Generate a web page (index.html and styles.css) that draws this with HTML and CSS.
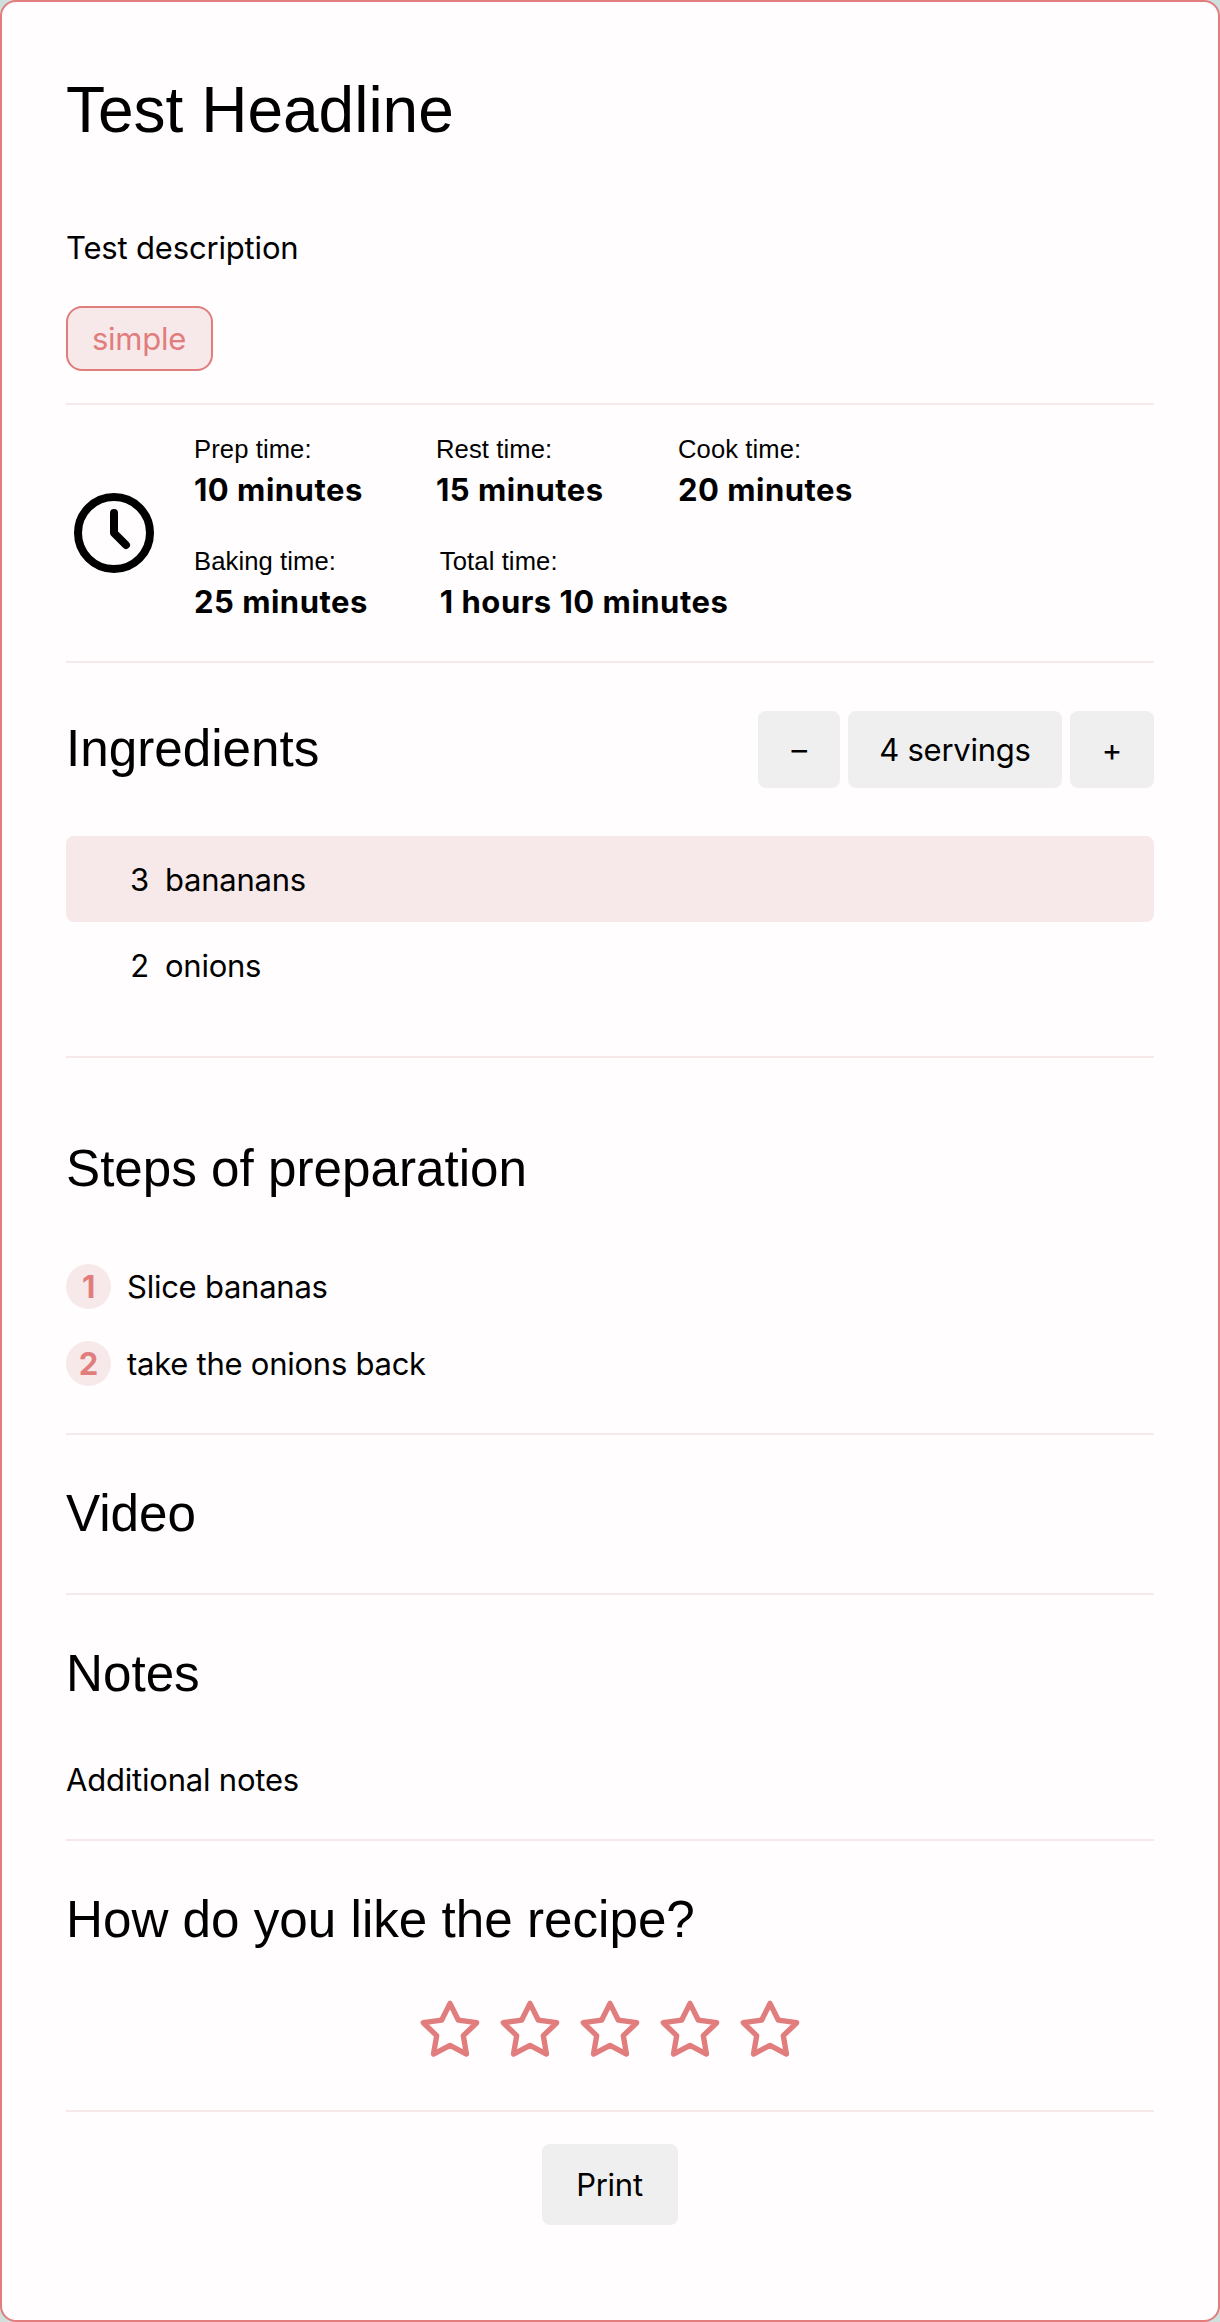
FILE: index.html
```html
<!DOCTYPE html>
<html lang="en">
<head>
<meta charset="utf-8">
<title>Test Headline</title>
<link rel="stylesheet" href="styles.css">
</head>
<body>
<svg class="sprite" aria-hidden="true">
  <symbol id="star" viewBox="0 0 24 24">
    <polygon points="12 2 15.09 8.26 22 9.27 17 14.14 18.18 21.02 12 17.77 5.82 21.02 7 14.14 2 9.27 8.91 8.26 12 2"/>
  </symbol>
</svg>
<article class="recipe">
  <header class="intro">
    <h1 class="title">Test Headline</h1>
    <p class="description">Test description</p>
    <span class="tag">simple</span>
  </header>

  <section class="times">
    <svg class="clock" viewBox="0 0 24 24"><circle cx="12" cy="12" r="9"/><path d="M12 7v5l3 3"/></svg>
    <div class="time-list">
      <div class="time-row">
        <div class="time"><div class="label">Prep time:</div><div class="value">10 minutes</div></div>
        <div class="time"><div class="label">Rest time:</div><div class="value">15 minutes</div></div>
        <div class="time"><div class="label">Cook time:</div><div class="value">20 minutes</div></div>
      </div>
      <div class="time-row">
        <div class="time"><div class="label">Baking time:</div><div class="value">25 minutes</div></div>
        <div class="time"><div class="label">Total time:</div><div class="value">1 hours 10 minutes</div></div>
      </div>
    </div>
  </section>

  <section class="ingredients">
    <div class="ingredients-head">
      <h2 class="heading">Ingredients</h2>
      <div class="servings">
        <button class="button minus">–</button>
        <button class="button count">4 servings</button>
        <button class="button plus">+</button>
      </div>
    </div>
    <ul class="ingredient-list">
      <li class="ingredient"><span class="amount">3</span><span>bananans</span></li>
      <li class="ingredient"><span class="amount">2</span><span>onions</span></li>
    </ul>
  </section>

  <section class="steps">
    <h2 class="heading">Steps of preparation</h2>
    <ol class="step-list">
      <li class="step"><span class="number">1</span><span>Slice bananas</span></li>
      <li class="step"><span class="number">2</span><span>take the onions back</span></li>
    </ol>
  </section>

  <section class="video">
    <h2 class="heading">Video</h2>
  </section>

  <section class="notes">
    <h2 class="heading">Notes</h2>
    <p class="note">Additional notes</p>
  </section>

  <section class="rating">
    <h2 class="heading">How do you like the recipe?</h2>
    <div class="stars">
      <svg class="star"><use href="#star"/></svg>
      <svg class="star"><use href="#star"/></svg>
      <svg class="star"><use href="#star"/></svg>
      <svg class="star"><use href="#star"/></svg>
      <svg class="star"><use href="#star"/></svg>
    </div>
  </section>

  <footer class="actions">
    <button class="button print">Print</button>
  </footer>
</article>
</body>
</html>
```
FILE: styles.css
```css
:root {
  --accent: #e17d7d;
  --tint: #f7e9e9;
}

* {
  box-sizing: border-box;
}

body {
  margin: 0;
  background: #cfdfdc;
  color: #000;
  font: 31px/48px Inter, "Liberation Sans", sans-serif;
  letter-spacing: -0.25px;
}

h1, h2, p, ul, ol {
  margin: 0;
  padding: 0;
  font-weight: 400;
}

ul, ol {
  list-style: none;
}

.sprite {
  display: none;
}

.recipe {
  min-height: 2322px;
  padding: 70px 64px 0;
  border: 2px solid var(--accent);
  border-radius: 16px;
  background: #fffdfe;
}

.intro,
.times,
.ingredients,
.steps,
.video,
.notes,
.rating {
  border-bottom: 2px solid var(--tint);
}

.title,
.heading,
.label {
  font-family: "Liberation Sans", Arial, sans-serif;
  letter-spacing: 0;
}

.title {
  font-size: 64px;
  line-height: 76px;
}

.heading {
  font-size: 51.2px;
  line-height: 60px;
}

.intro {
  display: flex;
  flex-direction: column;
  align-items: flex-start;
  padding-bottom: 32px;
}

.description {
  margin-top: 76px;
  letter-spacing: -0.17px;
}

.tag {
  height: 65px;
  margin-top: 34px;
  padding: 0 24px;
  width: 147px;
  border: 2px solid var(--accent);
  border-radius: 16px;
  background: var(--tint);
  color: var(--accent);
  line-height: 62px;
}

.times {
  display: flex;
  align-items: center;
  gap: 32px;
  height: 258px;
}

.clock {
  width: 96px;
  height: 96px;
  fill: none;
  stroke: #000;
  stroke-width: 2;
  stroke-linecap: round;
  stroke-linejoin: round;
}

.time-list {
  display: flex;
  flex-direction: column;
  gap: 31px;
  padding-bottom: 7px;
}

.time-row {
  display: flex;
  gap: 72px;
}

.time {
  min-width: 170px;
}

.label {
  font-size: 25.6px;
  line-height: 33px;
  letter-spacing: 0.1px;
}

.value {
  font-weight: 700;
  letter-spacing: 0.5px;
}

.ingredients {
  padding: 48px 0;
}

.ingredients-head {
  display: flex;
  justify-content: space-between;
  align-items: center;
}

.ingredients-head .heading {
  padding-bottom: 2px;
}

.servings {
  display: flex;
  gap: 8px;
}

.button {
  height: 77px;
  padding: 0;
  border: 0;
  border-radius: 8px;
  background: #efefef;
  color: #000;
  font: inherit;
  letter-spacing: inherit;
  text-align: center;
}

.minus {
  width: 82px;
}

.count {
  width: 214px;
}

.plus {
  width: 84px;
}

.ingredient-list {
  margin-top: 48px;
}

.ingredient {
  display: flex;
  align-items: center;
  gap: 16px;
  height: 86px;
  padding-top: 2px;
  border-radius: 8px;
}

.ingredient:nth-child(odd) {
  background: var(--tint);
}

.amount {
  width: 83px;
  text-align: right;
}

.steps {
  padding: 81px 0 47px;
}

.step-list {
  display: flex;
  flex-direction: column;
  gap: 32px;
  margin-top: 65px;
}

.step {
  display: flex;
  align-items: center;
  gap: 16px;
  height: 45px;
}

.number {
  width: 45px;
  height: 45px;
  border-radius: 50%;
  background: var(--tint);
  color: var(--accent);
  font-weight: 700;
  line-height: 45px;
  text-align: center;
}

.video {
  padding: 49px 0 49px;
}

.notes {
  padding: 49px 0 35px;
}

.note {
  margin-top: 52px;
  letter-spacing: -0.2px;
}

.rating {
  padding: 49px 0 48px;
}

.stars {
  display: flex;
  justify-content: center;
  gap: 16px;
  margin-top: 48px;
}

.star {
  width: 64px;
  height: 64px;
  fill: none;
  stroke: var(--accent);
  stroke-width: 2;
  stroke-linecap: round;
  stroke-linejoin: round;
}

.actions {
  display: flex;
  justify-content: center;
  padding-top: 32px;
}

.print {
  width: 136px;
  height: 81px;
  padding-right: 1px;
}
```
